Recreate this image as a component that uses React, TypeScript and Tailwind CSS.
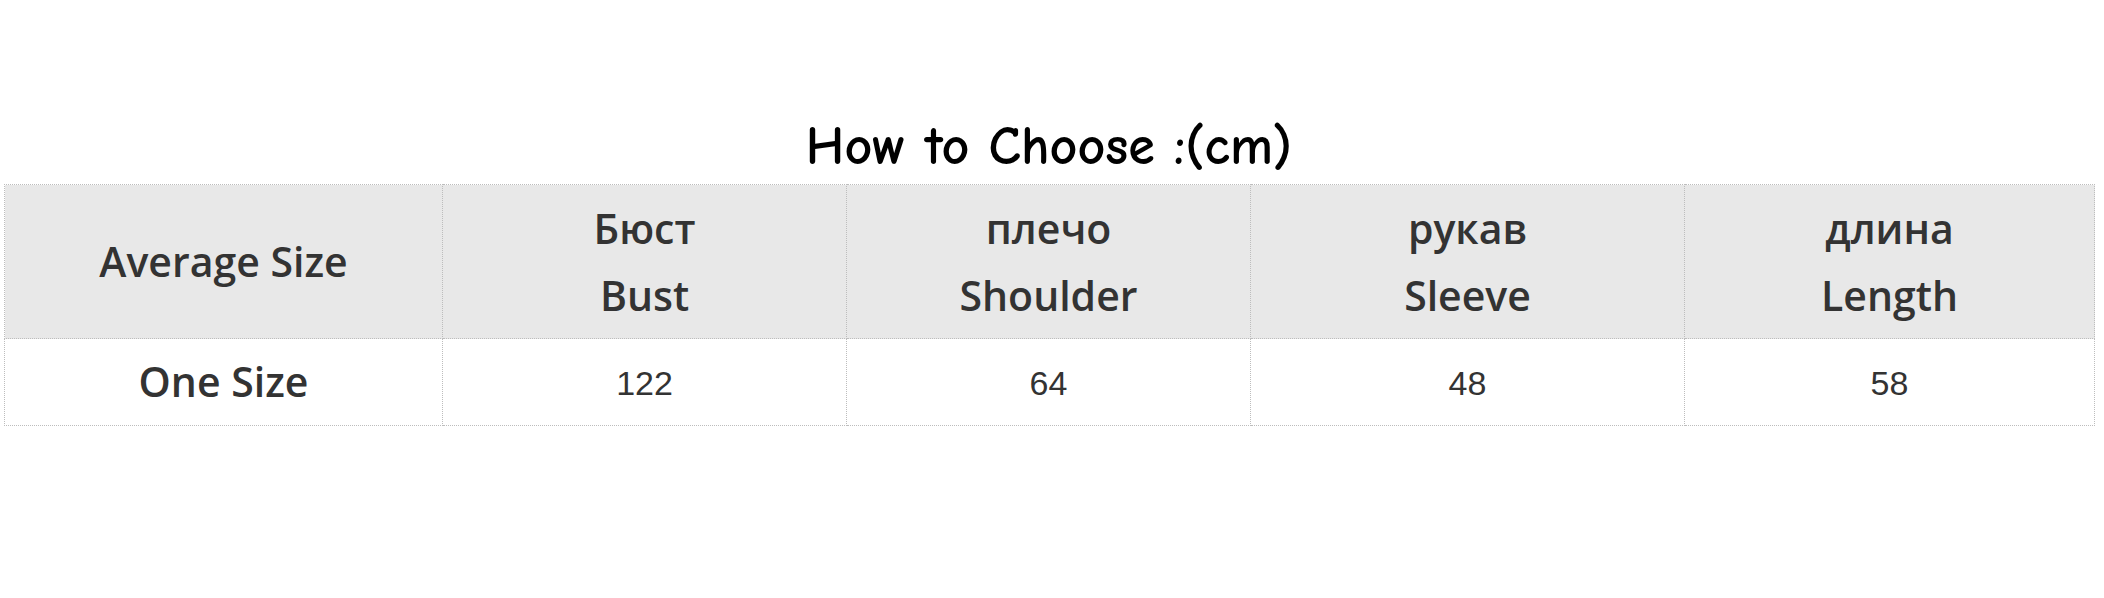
import React from 'react';

// Size chart: one header row (Russian + English), one data row
interface Column {
  ru: string;
  en: string;
  value: string;
  width: string;
}

const columns: Column[] = [
  { ru: 'Бюст', en: 'Bust', value: '122', width: 'w-[404px]' },
  { ru: 'плечо', en: 'Shoulder', value: '64', width: 'w-[404px]' },
  { ru: 'рукав', en: 'Sleeve', value: '48', width: 'w-[434px]' },
  { ru: 'длина', en: 'Length', value: '58', width: 'w-[410px]' },
];

const cell = 'border border-dotted border-[#bdbdbd] text-center align-middle';

export default function App() {
  return (
    <div className="min-h-[598px] w-full bg-white pl-[4px] pt-[110px]">
      <div className="w-[2090px]">
        <h1 className="text-center text-[54px] font-bold leading-[74px] text-black font-['Comic_Sans_MS','Comic_Neue','Open_Sans',sans-serif]">
          How to Choose :(cm)
        </h1>

        <table className="w-[2090px] table-fixed border-collapse text-[#333] font-['Open_Sans',sans-serif]">
          <colgroup>
            <col className="w-[438px]" />
            {columns.map((c) => (
              <col key={c.en} className={c.width} />
            ))}
          </colgroup>
          <thead>
            <tr className="h-[154px] bg-[#e8e8e8]">
              <th className={`${cell} text-[41px] font-semibold`}>Average Size</th>
              {columns.map((c) => (
                <th key={c.en} className={`${cell} text-[41px] font-semibold leading-[67px]`}>
                  <div>{c.ru}</div>
                  <div>{c.en}</div>
                </th>
              ))}
            </tr>
          </thead>
          <tbody>
            <tr className="h-[87px] bg-white">
              <td className={`${cell} text-[41px] font-semibold`}>One Size</td>
              {columns.map((c) => (
                <td key={c.en} className={`${cell} pt-[2px] text-[34px] font-['Liberation_Sans',sans-serif]`}>
                  {c.value}
                </td>
              ))}
            </tr>
          </tbody>
        </table>
      </div>
    </div>
  );
}
